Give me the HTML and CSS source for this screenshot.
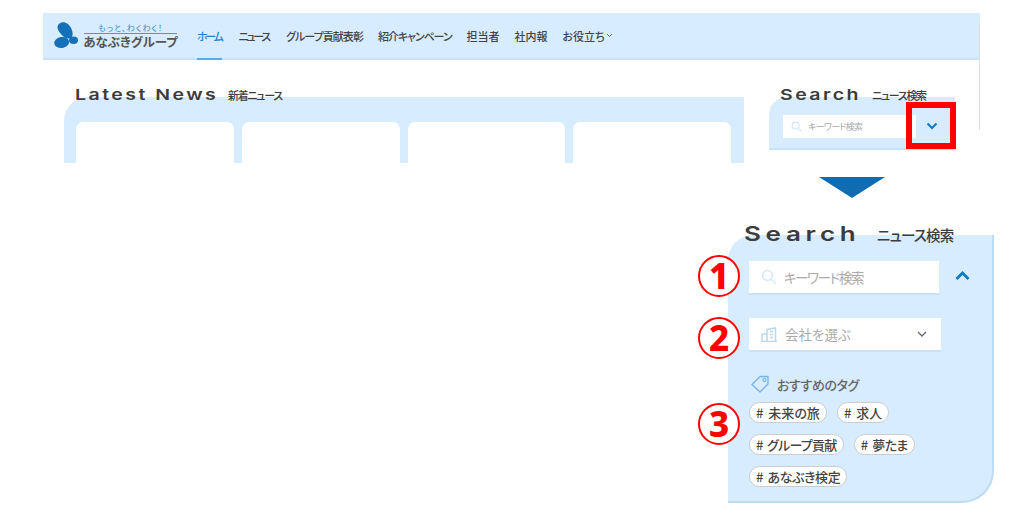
FILE: index.html
```html
<!DOCTYPE html>
<html lang="ja">
<head>
    <meta charset="UTF-8">
    <meta name="viewport" content="width=device-width, initial-scale=1.0">
    <title>あなぶきグループ ニュース検索</title>
    <link rel="stylesheet" href="styles.css">
</head>
<body>
    <div class="shot">
        <header class="site-header">
            <a class="logo">
                <svg class="logo-mark" width="24" height="27" viewBox="0 0 24 27">
                    <path d="M5.500 1.500C9-1 14.500.500 17.500 7c2 4.500 1.500 9-2.500 9.500C11 17 7.500 13 5 9.500 3 6.500 3 3.500 5.500 1.500z" fill="#1470b8"/>
                    <ellipse cx="7.700" cy="20.500" rx="7.500" ry="5.500" transform="rotate(-8 7.700 20.500)" fill="#1470b8"/>
                    <ellipse cx="19.500" cy="18.300" rx="4.500" ry="3.700" fill="#1470b8"/>
                </svg>
                <span class="logo-text">
                    <span class="logo-sub">もっと、わくわく！</span>
                    <span class="logo-name">あなぶきグループ</span>
                </span>
            </a>
            <nav class="nav">
                <a class="nav-item active kana-x">ホーム</a>
                <a class="nav-item kana-x">ニュース</a>
                <a class="nav-item kana-s">グループ貢献表彰</a>
                <a class="nav-item kana-m">紹介キャンペーン</a>
                <a class="nav-item">担当者</a>
                <a class="nav-item">社内報</a>
                <a class="nav-item">お役立ち<svg class="nav-caret" width="7" height="5" viewBox="0 0 7 5"><path d="M1 1l2.500 2.500L6 1" fill="none" stroke="#666" stroke-width="1"/></svg></a>
            </nav>
        </header>
        <div class="shot-main">
            <section class="news">
                <h2 class="title"><span class="title-en title-latest">Latest News</span><span class="title-ja">新着ニュース</span></h2>
                <div class="news-panel">
                    <div class="news-card"></div>
                    <div class="news-card"></div>
                    <div class="news-card"></div>
                    <div class="news-card"></div>
                </div>
            </section>
            <section class="mini-search">
                <h2 class="title"><span class="title-en title-search">Search</span><span class="title-ja">ニュース検索</span></h2>
                <div class="mini-panel">
                    <div class="mini-input">
                        <svg width="11" height="11" viewBox="0 0 12 12"><circle cx="5" cy="5" r="3.800" fill="none" stroke="#cfe6f8" stroke-width="1.200"/><path d="M8 8l3 3" stroke="#cfe6f8" stroke-width="1.200"/></svg>
                        <span>キーワード検索</span>
                    </div>
                    <svg class="mini-chevron" width="12" height="8" viewBox="0 0 12 8"><path d="M1.500 1.500L6 6l4.500-4.500" fill="none" stroke="#0f78c8" stroke-width="2"/></svg>
                </div>
                <div class="red-box"></div>
            </section>
            <div class="scroll-line"></div>
        </div>
    </div>

    <div class="lower">
        <div class="arrow-down"></div>
        <section class="search">
            <h2 class="search-title"><span class="search-en">Search</span><span class="search-ja">ニュース検索</span></h2>
            <div class="search-panel">
                <div class="field-row">
                    <div class="field field-key">
                        <svg width="16" height="16" viewBox="0 0 16 16"><circle cx="6.500" cy="6.500" r="5" fill="none" stroke="#d3e9fa" stroke-width="1.400"/><path d="M10.500 10.500l4.500 4.500" stroke="#d3e9fa" stroke-width="1.400"/></svg>
                        <span>キーワード検索</span>
                    </div>
                    <svg class="toggle" width="15" height="10" viewBox="0 0 15 10"><path d="M1.500 8L7.500 2l6 6" fill="none" stroke="#0f78c8" stroke-width="2.800"/></svg>
                    <div class="mark mark-1">1</div>
                </div>
                <div class="field-row">
                    <div class="field field-company">
                        <svg width="16" height="15" viewBox="0 0 16 15"><path d="M1 14V7h5v7M6 14V2.500L14.500 1v13M0 14.500h16M9 4.500h3M9 7.500h3M9 10.500h3" fill="none" stroke="#b9d8f0" stroke-width="1.500"/></svg>
                        <span class="field-text">会社を選ぶ</span>
                        <svg class="field-caret" width="10" height="6" viewBox="0 0 10 6"><path d="M1 1l4 4 4-4" fill="none" stroke="#667" stroke-width="1.300"/></svg>
                    </div>
                    <div class="mark mark-2">2</div>
                </div>
                <div class="tags">
                    <div class="tags-label">
                        <svg width="19" height="18" viewBox="0 0 19 18"><path d="M1 9.500L9 1.500h8v7.500l-8 8z" fill="none" stroke="#72b4e6" stroke-width="1.300" stroke-linejoin="round"/><circle cx="13.500" cy="5" r="1.500" fill="none" stroke="#72b4e6" stroke-width="1.100"/></svg>
                        <span>おすすめのタグ</span>
                    </div>
                    <div class="tag-list">
                        <a class="tag"># 未来の旅</a>
                        <a class="tag"># 求人</a>
                        <a class="tag tag-kana"># グループ貢献</a>
                        <a class="tag tag-tight"># 夢たま</a>
                        <a class="tag tag-tight"># あなぶき検定</a>
                    </div>
                    <div class="mark mark-3">3</div>
                </div>
            </div>
        </section>
    </div>
</body>
</html>
```

FILE: styles.css
```css
html, body {
    margin: 0;
    height: 524px;
    overflow: hidden;
}
body {
    font-family: "Noto Sans CJK JP", "Noto Sans", sans-serif;
    color: #444;
    background-color: white;
    font-feature-settings: "palt";
}
h2 {
    margin: 0;
    font-weight: 500;
}

/* top part: the page as it looks closed */
.shot {
    margin: 13px 0 0 43px;
    width: 937px;
    height: 150px;
    overflow: hidden;
    position: relative;
}
.site-header {
    height: 45px;
    background-color: #d7ecfe;
    border-bottom: 2px solid #c9e2f7;
    display: flex;
    align-items: stretch;
    padding-left: 11px;
}
.logo {
    display: flex;
    align-items: center;
    gap: 6px;
    width: 143px;
}
.logo-text {
    display: flex;
    flex-direction: column;
    width: 93px;
    align-items: center;
}
.logo-sub {
    font-size: 8px;
    line-height: 11px;
    letter-spacing: 1px;
    color: #2f8fd0;
    border-bottom: 1px solid #888;
    width: 100%;
    text-align: center;
}
.logo-name {
    font-size: 12.500px;
    line-height: 15px;
    font-weight: 700;
    color: #555;
    white-space: nowrap;
}
.nav {
    display: flex;
    gap: 15px;
}
.nav-item {
    font-size: 11px;
    font-weight: 500;
    color: #444;
    display: flex;
    align-items: center;
    gap: 1px;
    white-space: nowrap;
    margin-bottom: -2px;
    border-bottom: 2px solid transparent;
}
.kana-x {
    letter-spacing: -2.300px;
    margin-right: 2px;
}
.kana-m {
    letter-spacing: -1.100px;
}
.kana-s {
    letter-spacing: -0.950px;
}
.nav-item.active {
    color: #1f83c9;
    border-bottom-color: #5aaae3;
}
.shot-main {
    display: flex;
    padding: 27px 0 0 21px;
}
.title {
    display: flex;
    align-items: baseline;
    height: 16px;
    margin: 0 0 -6px 11px;
    position: relative;
    z-index: 1;
    white-space: nowrap;
}
.title-en {
    font-family: "Inter", sans-serif;
    font-weight: 600;
    font-size: 15px;
    line-height: 16px;
    letter-spacing: 1.900px;
    color: #3c3c3c;
    transform: scaleX(1.3);
    transform-origin: left;
}
.title-latest {
    width: 153px;
}
.title-search {
    width: 92px;
}
.title-ja {
    font-size: 11px;
    letter-spacing: -1.300px;
    color: #3c3c3c;
}
.news {
    width: 680px;
}
.news-panel {
    display: flex;
    gap: 8px;
    height: 66px;
    padding: 25px 13px 0 12px;
    box-sizing: border-box;
    background-color: #d7ecfe;
    border-top-left-radius: 24px;
}
.news-card {
    flex: 1;
    background-color: white;
    border-radius: 7px 7px 0 0;
    height: 60px;
}
.mini-search {
    margin-left: 25px;
    width: 186px;
    position: relative;
}
.mini-panel {
    height: 53px;
    box-sizing: border-box;
    background-color: #d7ecfe;
    border-top-left-radius: 18px;
    border-bottom: 2px solid #c9e2f7;
    padding: 18px 0 0 14px;
    display: flex;
    align-items: flex-start;
}
.mini-input {
    width: 133px;
    height: 23px;
    background-color: white;
    display: flex;
    align-items: center;
    gap: 6px;
    padding-left: 8px;
    box-sizing: border-box;
    font-size: 9px;
    letter-spacing: -0.700px;
    color: #aaa;
}
.mini-chevron {
    margin: 7px 0 0 10px;
}
.red-box {
    position: absolute;
    left: 137px;
    top: 15px;
    width: 50px;
    height: 47px;
    box-sizing: border-box;
    border: 6px solid #f00;
}
.scroll-line {
    position: absolute;
    right: 0;
    top: 11px;
    width: 1px;
    height: 106px;
    background-color: #ddd;
}

/* lower part: the same search opened */
.lower {
    position: relative;
    display: flex;
    flex-direction: column;
    align-items: flex-end;
}
.arrow-down {
    width: 0;
    height: 0;
    margin: 14px 139px 0 0;
    border-left: 33px solid transparent;
    border-right: 33px solid transparent;
    border-top: 21px solid #0f6cb0;
}
.search {
    width: 266px;
    margin: 21px 30px 0 0;
    position: relative;
}
.search-title {
    position: absolute;
    top: 3px;
    left: 16px;
    display: flex;
    align-items: baseline;
    white-space: nowrap;
    z-index: 1;
}
.search-en {
    font-family: "Inter", sans-serif;
    font-weight: 600;
    font-size: 20px;
    line-height: 24px;
    letter-spacing: 3.600px;
    color: #3c3c3c;
    transform: scaleX(1.3);
    transform-origin: left;
    width: 133px;
}
.search-ja {
    font-size: 14.500px;
    letter-spacing: -0.800px;
    color: #3c3c3c;
}
.search-panel {
    margin-top: 16px;
    height: 268px;
    box-sizing: border-box;
    background-color: #d7ecfe;
    border-right: 2px solid #bcdcf3;
    border-bottom: 2px solid #bcdcf3;
    border-radius: 25px 0 32px 0;
    padding: 26px 0 0 21px;
    position: relative;
}
.field-row {
    display: flex;
    align-items: flex-start;
    height: 57px;
}
.field {
    height: 34px;
    box-sizing: border-box;
    background-color: white;
    border-bottom: 2px solid #c9e2f7;
    display: flex;
    align-items: center;
    padding-left: 12px;
    font-size: 13.500px;
    color: #aaa;
}
.field-key {
    width: 190px;
    gap: 7px;
    letter-spacing: -1.400px;
}
.toggle {
    margin: 10px 0 0 16px;
}
.field-company {
    width: 192px;
    gap: 8px;
}
.field-caret {
    margin-left: auto;
    margin-right: 14px;
}
.tags {
    margin-top: -1px;
}
.tags-label {
    display: flex;
    align-items: center;
    gap: 7px;
    margin-left: 2px;
    font-size: 13px;
    font-weight: 500;
    letter-spacing: -0.400px;
    color: #666;
    height: 20px;
}
.tag-list {
    display: flex;
    flex-wrap: wrap;
    gap: 11px 10px;
    width: 175px;
    margin-top: 8px;
}
.tag {
    height: 21px;
    box-sizing: border-box;
    padding: 0 6px;
    border: 1px solid #ccc;
    border-radius: 11px;
    background-color: white;
    display: flex;
    align-items: center;
    font-size: 13px;
    font-weight: 500;
    word-spacing: 2px;
    color: #444;
    white-space: nowrap;
}
.tag-kana {
    letter-spacing: -0.700px;
}
.tag-tight {
    letter-spacing: -0.400px;
}

/* red numbered circles laid over the panel */
.mark {
    position: absolute;
    left: -30px;
    width: 42px;
    height: 42px;
    box-sizing: border-box;
    border: 2px solid #f00;
    border-radius: 50%;
    background-color: white;
    color: #f00;
    font-family: "Noto Sans", sans-serif;
    font-size: 35px;
    line-height: 38px;
    font-weight: 800;
    display: flex;
    align-items: center;
    justify-content: center;
}
.mark-1 {
    top: 20px;
}
.mark-2 {
    top: 82px;
}
.mark-3 {
    top: 168px;
}
```
